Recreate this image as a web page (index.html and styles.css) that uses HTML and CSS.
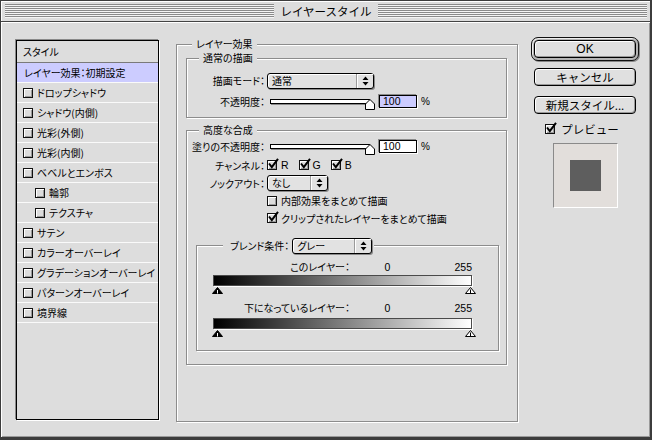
FILE: index.html
```html
<!DOCTYPE html>
<html lang="ja">
<head>
<meta charset="utf-8">
<title>レイヤースタイル</title>
<link rel="stylesheet" href="styles.css">
</head>
<body>
<div class="window">
  <div class="titlebar">
    <div class="stripes"></div>
    <span class="title">レイヤースタイル</span>
    <div class="stripes"></div>
  </div>
  <div class="main">
    <div class="stylelist">
      <div class="list-head hw">スタイル</div>
      <div class="list-row sel hw">レイヤー効果：初期設定</div>
      <div class="list-row hw"><span class="cb"></span>ドロップシャドウ</div>
      <div class="list-row hw"><span class="cb"></span>シャドウ(内側)</div>
      <div class="list-row hw"><span class="cb"></span>光彩(外側)</div>
      <div class="list-row hw"><span class="cb"></span>光彩(内側)</div>
      <div class="list-row hw"><span class="cb"></span>ベベルとエンボス</div>
      <div class="list-row sub hw"><span class="cb"></span>輪郭</div>
      <div class="list-row sub hw"><span class="cb"></span>テクスチャ</div>
      <div class="list-row hw"><span class="cb"></span>サテン</div>
      <div class="list-row hw"><span class="cb"></span>カラーオーバーレイ</div>
      <div class="list-row hw"><span class="cb"></span>グラデーションオーバーレイ</div>
      <div class="list-row hw"><span class="cb"></span>パターンオーバーレイ</div>
      <div class="list-row hw"><span class="cb"></span>境界線</div>
    </div>

    <div class="group effects">
      <span class="glabel gl-outer hw">レイヤー効果</span>

      <div class="group normal">
        <span class="glabel gl-inner hw">通常の描画</span>
        <div class="frow first h21">
          <span class="lbl hw">描画モード：</span>
          <div class="popup w-mode"><span class="popup-text hw">通常</span><span class="popup-arrow"><svg width="7" height="10" viewBox="0 0 7 10"><path d="M3.5 0.5L6.5 4H0.5Z M0.5 6H6.5L3.5 9.5Z" fill="#000"/></svg></span></div>
        </div>
        <div class="frow h20">
          <span class="lbl hw">不透明度：</span>
          <div class="track"><svg class="thumb" width="10" height="11" viewBox="0 0 10 11"><path d="M0.5 10.5V5L5 0.5L9.5 5V10.5Z" fill="#fff" stroke="#000"/></svg></div>
          <span class="field lav">100</span><span class="pct">%</span>
        </div>
      </div>

      <div class="group advanced">
        <span class="glabel gl-inner hw">高度な合成</span>
        <div class="frow h20">
          <span class="lbl hw">塗りの不透明度：</span>
          <div class="track"><svg class="thumb" width="10" height="11" viewBox="0 0 10 11"><path d="M0.5 10.5V5L5 0.5L9.5 5V10.5Z" fill="#fff" stroke="#000"/></svg></div>
          <span class="field">100</span><span class="pct">%</span>
        </div>
        <div class="frow h18">
          <span class="lbl hw">チャンネル：</span>
          <span class="cb on"><svg class="tick" width="12" height="12" viewBox="0 0 12 12"><path d="M2 5.5L4.8 9L11 0.8" fill="none" stroke="#000" stroke-width="2"/></svg></span><span class="chan">R</span>
          <span class="cb on"><svg class="tick" width="12" height="12" viewBox="0 0 12 12"><path d="M2 5.5L4.8 9L11 0.8" fill="none" stroke="#000" stroke-width="2"/></svg></span><span class="chan">G</span>
          <span class="cb on"><svg class="tick" width="12" height="12" viewBox="0 0 12 12"><path d="M2 5.5L4.8 9L11 0.8" fill="none" stroke="#000" stroke-width="2"/></svg></span><span class="chan">B</span>
        </div>
        <div class="frow h18">
          <span class="lbl hw">ノックアウト：</span>
          <div class="popup w-knock"><span class="popup-text hw">なし</span><span class="popup-arrow"><svg width="7" height="10" viewBox="0 0 7 10"><path d="M3.5 0.5L6.5 4H0.5Z M0.5 6H6.5L3.5 9.5Z" fill="#000"/></svg></span></div>
        </div>
        <div class="frow h17">
          <span class="lbl"></span>
          <span class="cb"></span><span class="ctext hw">内部効果をまとめて描画</span>
        </div>
        <div class="frow h18">
          <span class="lbl"></span>
          <span class="cb on"><svg class="tick" width="12" height="12" viewBox="0 0 12 12"><path d="M2 5.5L4.8 9L11 0.8" fill="none" stroke="#000" stroke-width="2"/></svg></span><span class="ctext hw">クリップされたレイヤーをまとめて描画</span>
        </div>

        <div class="group blend">
          <div class="glabel gl-blend">
            <span class="hw">ブレンド条件：</span>
            <div class="popup w-blend"><span class="popup-text hw">グレー</span><span class="popup-arrow"><svg width="7" height="10" viewBox="0 0 7 10"><path d="M3.5 0.5L6.5 4H0.5Z M0.5 6H6.5L3.5 9.5Z" fill="#000"/></svg></span></div>
          </div>
          <div class="rrow r-first"><span class="rl hw">このレイヤー：</span><span class="rv0">0</span><span class="rv1">255</span></div>
          <div class="gbar"></div>
          <div class="tris">
            <svg width="11" height="7" viewBox="0 0 11 7"><path d="M5.5 0.5L10.5 6.5H0.5Z" fill="#000" stroke="#000"/><path d="M5.5 3V6.5" stroke="#fff"/></svg>
            <svg width="11" height="7" viewBox="0 0 11 7"><path d="M5.5 0.5L10.5 6.5H0.5Z" fill="#fff" stroke="#000"/><path d="M5.5 2.5V6.5" stroke="#000"/></svg>
          </div>
          <div class="rrow r-second"><span class="rl hw">下になっているレイヤー：</span><span class="rv0">0</span><span class="rv1">255</span></div>
          <div class="gbar g2"></div>
          <div class="tris">
            <svg width="11" height="7" viewBox="0 0 11 7"><path d="M5.5 0.5L10.5 6.5H0.5Z" fill="#000" stroke="#000"/><path d="M5.5 3V6.5" stroke="#fff"/></svg>
            <svg width="11" height="7" viewBox="0 0 11 7"><path d="M5.5 0.5L10.5 6.5H0.5Z" fill="#fff" stroke="#000"/><path d="M5.5 2.5V6.5" stroke="#000"/></svg>
          </div>
        </div>
      </div>
    </div>

    <div class="side">
      <div class="default-ring"><div class="btn ok">OK</div></div>
      <div class="btn b-cancel">キャンセル</div>
      <div class="btn b-new">新規スタイル...</div>
      <div class="preview-check">
        <span class="cb on"><svg class="tick" width="12" height="12" viewBox="0 0 12 12"><path d="M2 5.5L4.8 9L11 0.8" fill="none" stroke="#000" stroke-width="2"/></svg></span>
        <span class="pv-text">プレビュー</span>
      </div>
      <div class="preview-box"><div class="preview-square"></div></div>
    </div>
  </div>
</div>
</body>
</html>
```
FILE: styles.css
```css
* { box-sizing: border-box; }
html, body { margin: 0; padding: 0; }
body {
  width: 652px;
  height: 440px;
  overflow: hidden;
  background: #dddddd;
  font-family: "Noto Sans CJK JP", "Noto Sans", sans-serif;
  font-size: 10px;
  color: #000;
}
.hw {
  font-size: 10px;
  font-feature-settings: "palt" 1;
}

.window {
  width: 652px;
  height: 440px;
  border: 1px solid #3c3c3c;
  border-right-width: 2px;
  border-bottom-width: 3px;
  background: #dddddd;
  display: flex;
  flex-direction: column;
}

/* title bar */
.titlebar {
  height: 21px;
  flex: none;
  display: flex;
  align-items: center;
  padding: 0 3px 0 4px;
  border-bottom: 1px solid #444;
  box-shadow: inset 1px 1px 0 #fff;
}
.stripes {
  flex: 1;
  height: 14px;
  background: repeating-linear-gradient(to bottom, #8a8a8a 0 1px, #f4f4f4 1px 2px);
}
.title {
  padding: 0 6px;
  font-size: 11.5px;
  line-height: 14px;
}

/* main area */
.main {
  flex: 1;
  display: flex;
  align-items: flex-start;
  padding: 15px 0 0 15px;
  box-shadow: inset 1px 1px 0 #fff, inset -1px -1px 0 #9a9a9a;
}

/* style list */
.stylelist {
  width: 143px;
  height: 380px;
  margin-top: 3px;
  flex: none;
  border: 1px solid #000;
  box-shadow: -1px -1px 0 #8a8a8a, 1px 1px 0 #fff;
  display: flex;
  flex-direction: column;
}
.list-head {
  height: 22px;
  line-height: 21px;
  padding-left: 6px;
  border-bottom: 1px solid #7a7a7a;
}
.list-row {
  height: 20px;
  border-bottom: 1px solid #fafafa;
  display: flex;
  align-items: center;
  padding-left: 6px;
  white-space: nowrap;
}
.list-row .cb { margin-right: 4px; }
.list-row.sub { padding-left: 18px; }
.list-row.sel {
  background: #ccccff;
  padding-left: 7px;
}

/* checkbox */
.cb {
  position: relative;
  flex: none;
  width: 10px;
  height: 10px;
  border: 1px solid #111;
  background: #dcdcdc;
  box-shadow: inset 1px 1px 0 #fff, inset -1px -1px 0 #9a9a9a;
}
.tick {
  position: absolute;
  left: -1px;
  top: -3px;
}

/* group boxes */
.group {
  border: 1px solid #8c8c8c;
  box-shadow: 1px 1px 0 #fff, inset 1px 1px 0 #fff;
  display: flex;
  flex-direction: column;
  flex: none;
}
.glabel {
  align-self: flex-start;
  background: #dddddd;
  height: 12px;
  line-height: 12px;
  margin-top: -7px;
  padding: 0 4px;
  white-space: nowrap;
}
.gl-outer { margin-left: 15px; }
.gl-inner { margin-left: 12px; }

.effects {
  width: 342px;
  height: 378px;
  margin: 7px 0 0 17px;
}
.normal {
  height: 60px;
  margin: 8px 10px 0 9px;
}
.advanced {
  height: 235px;
  margin: 12px 10px 0 9px;
}
.blend {
  height: 106px;
  margin: 18px 7px 0 9px;
}
.gl-blend {
  display: flex;
  align-items: center;
  height: 16px;
  line-height: 16px;
  margin-top: -8px;
  margin-left: 26px;
  padding: 0 2px 0 7px;
}
.gl-blend .popup { margin-left: 3px; }

/* form rows */
.frow {
  display: flex;
  align-items: center;
  padding-left: 9px;
  white-space: nowrap;
}
.frow.first { margin-top: 6px; }
.h21 { height: 21px; }
.h20 { height: 20px; }
.h18 { height: 18px; }
.h17 { height: 17px; }
.lbl {
  width: 69px;
  margin-right: 2px;
  display: flex;
  justify-content: flex-end;
  flex: none;
}
.chan {
  font-family: "Liberation Sans", sans-serif;
  font-size: 10.5px;
  margin: 0 10px 0 4px;
}
.ctext { margin-left: 4px; }

/* popup menu */
.popup {
  display: flex;
  height: 16px;
  border: 1px solid #000;
  border-radius: 3px;
  background: #e2e2e2;
  box-shadow: inset 1px 1px 0 #fff, 1px 1px 0 #8a8a8a;
  flex: none;
}
.w-mode { width: 107px; }
.w-knock { width: 61px; }
.w-blend { width: 80px; }
.popup-text {
  flex: 1;
  padding-left: 4px;
  line-height: 14px;
}
.popup-arrow {
  width: 17px;
  border-left: 1px solid #9a9a9a;
  display: flex;
  align-items: center;
  justify-content: center;
  box-shadow: inset 1px 1px 0 #fff;
}

/* slider */
.track {
  position: relative;
  width: 100px;
  height: 5px;
  margin-left: 3px;
  border: 1px solid #000;
  background: #fff;
  box-shadow: 1px 1px 0 #8a8a8a;
  flex: none;
}
.thumb {
  position: absolute;
  right: -6px;
  top: -1px;
}
.field {
  width: 38px;
  height: 13px;
  margin-left: 9px;
  border: 1px solid #000;
  box-shadow: -1px -1px 0 #8a8a8a, 1px 1px 0 #fff;
  background: #fff;
  font-family: "Liberation Sans", sans-serif;
  font-size: 10.5px;
  line-height: 11px;
  padding-left: 3px;
  flex: none;
}
.field.lav { background: #ccccff; }
.pct {
  margin-left: 4px;
  font-family: "Liberation Sans", sans-serif;
  font-size: 10px;
}

/* blend ranges */
.rrow {
  display: grid;
  grid-template-columns: 137px 75px 1fr;
  width: 259px;
  height: 12px;
  line-height: 12px;
  margin-left: 16px;
  white-space: nowrap;
}
.r-first { margin-top: 7px; }
.r-second { margin-top: 8px; }
.rl { text-align: right; }
.rv0, .rv1 {
  font-family: "Liberation Sans", sans-serif;
  font-size: 10.5px;
}
.rv0 { text-align: center; }
.rv1 { text-align: right; }
.gbar {
  width: 259px;
  height: 11px;
  margin: 2px 0 0 16px;
  border: 1px solid #4a4a4a;
  box-shadow: 1px 1px 0 #fff;
  background: linear-gradient(to right, #000, #fff);
}
.gbar.g2 { margin-top: 4px; }
.tris {
  display: flex;
  justify-content: space-between;
  width: 264px;
  height: 7px;
  margin: 1px 0 0 15px;
}
.tris svg { display: block; }

/* side column */
.side {
  width: 108px;
  margin-left: 13px;
  flex: none;
  display: flex;
  flex-direction: column;
  align-items: center;
}
.default-ring {
  width: 108px;
  height: 24px;
  border: 1px solid #111;
  border-radius: 7px;
  padding: 2px;
  background: #b4b4b4;
  box-shadow: inset 1px 1px 0 #eee, 1px 1px 0 #888;
}
.btn {
  width: 102px;
  height: 18px;
  border: 1px solid #000;
  border-radius: 4px;
  background: #e0e0e0;
  box-shadow: inset 1px 1px 0 #fff, inset -1px -1px 0 #999;
  text-align: center;
  line-height: 16px;
  font-size: 11.5px;
  white-space: nowrap;
  flex: none;
}
.btn.ok {
  font-family: "Liberation Sans", sans-serif;
  font-size: 12px;
}
.b-cancel { margin-top: 7px; }
.b-new { margin-top: 10px; }
.preview-check {
  display: flex;
  align-items: center;
  height: 10px;
  margin-top: 10px;
  margin-left: -6px;
}
.pv-text {
  margin-left: 6px;
  font-size: 11.5px;
}
.preview-box {
  width: 65px;
  height: 65px;
  margin-top: 9px;
  border: 1px solid;
  border-color: #8a8a8a #fff #fff #8a8a8a;
  background: #e2dedb;
  display: flex;
  align-items: center;
  justify-content: center;
}
.preview-square {
  width: 31px;
  height: 31px;
  background: #5e5e5e;
}
```
